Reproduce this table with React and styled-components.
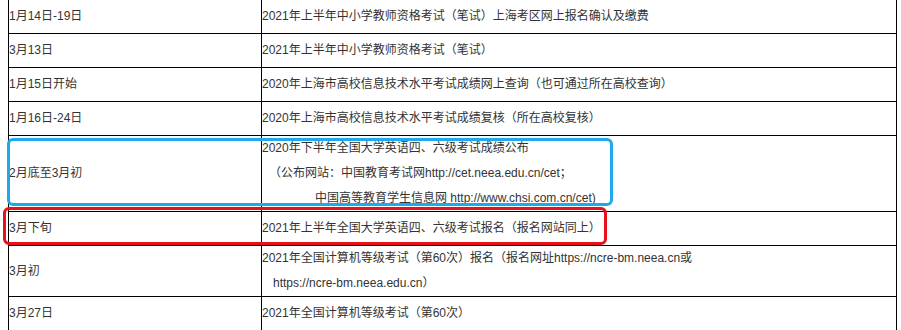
import styled, { createGlobalStyle } from "styled-components";

const GlobalStyle = createGlobalStyle`
  html, body {
    margin: 0;
    padding: 0;
    background: #fff;
  }
`;

const SCHEDULE = [
  { date: "1月14日-19日", lines: [["2021年上半年中小学教师资格考试（笔试）上海考区网上报名确认及缴费", 0]] },
  { date: "3月13日", lines: [["2021年上半年中小学教师资格考试（笔试）", 0]] },
  { date: "1月15日开始", lines: [["2020年上海市高校信息技术水平考试成绩网上查询（也可通过所在高校查询）", 0]] },
  { date: "1月16日-24日", lines: [["2020年上海市高校信息技术水平考试成绩复核（所在高校复核）", 0]] },
  {
    date: "2月底至3月初",
    lines: [
      ["2020年下半年全国大学英语四、六级考试成绩公布", 0],
      ["（公布网站：中国教育考试网http://cet.neea.edu.cn/cet；", 7],
      ["中国高等教育学生信息网 http://www.chsi.com.cn/cet)", 53],
    ],
  },
  { date: "3月下旬", lines: [["2021年上半年全国大学英语四、六级考试报名（报名网站同上）", 0]] },
  {
    date: "3月初",
    lines: [
      ["2021年全国计算机等级考试（第60次）报名（报名网址https://ncre-bm.neea.cn或", 0],
      ["https://ncre-bm.neea.edu.cn）", 11],
    ],
  },
  { date: "3月27日", lines: [["2021年全国计算机等级考试（第60次）", 0]] },
];

export default function App() {
  return (
    <Page>
      <GlobalStyle />
      <Board>
        <Table>
          <tbody>
            {SCHEDULE.map((row) => (
              <tr key={row.date}>
                <DateCell>{row.date}</DateCell>
                <EventCell>
                  {row.lines.map(([text, indent]) => (
                    <Line key={text} $indent={indent}>
                      {text}
                    </Line>
                  ))}
                </EventCell>
              </tr>
            ))}
          </tbody>
        </Table>
        <Mark $color="#1ea8ee" $left={7} $top={139} $width={606} $height={68} />
        <Mark $color="#e8111a" $left={3} $top={208} $width={604} $height={38} />
      </Board>
    </Page>
  );
}

const Page = styled.div`
  width: 901px;
  height: 330px;
  overflow: hidden;
  font-family: "Liberation Sans", "Noto Sans CJK SC", sans-serif;
  font-size: 12px;
  color: #333;
`;

const Board = styled.div`
  position: relative;
  padding-left: 8px;
`;

const Table = styled.table`
  width: 889px;
  margin-top: -1px;
  border-collapse: collapse;
  table-layout: fixed;

  td {
    border: 1px solid #000;
    padding: 0;
    height: 33px;
    line-height: 25px;
    vertical-align: middle;
    white-space: nowrap;
  }
`;

const DateCell = styled.td`
  width: 252px;
`;

const EventCell = styled.td``;

const Line = styled.div`
  padding-left: ${(p) => p.$indent}px;
`;

const Mark = styled.div`
  position: absolute;
  left: ${(p) => p.$left}px;
  top: ${(p) => p.$top}px;
  width: ${(p) => p.$width}px;
  height: ${(p) => p.$height}px;
  box-sizing: border-box;
  border: 3px solid ${(p) => p.$color};
  border-radius: 6px;
  pointer-events: none;
`;
